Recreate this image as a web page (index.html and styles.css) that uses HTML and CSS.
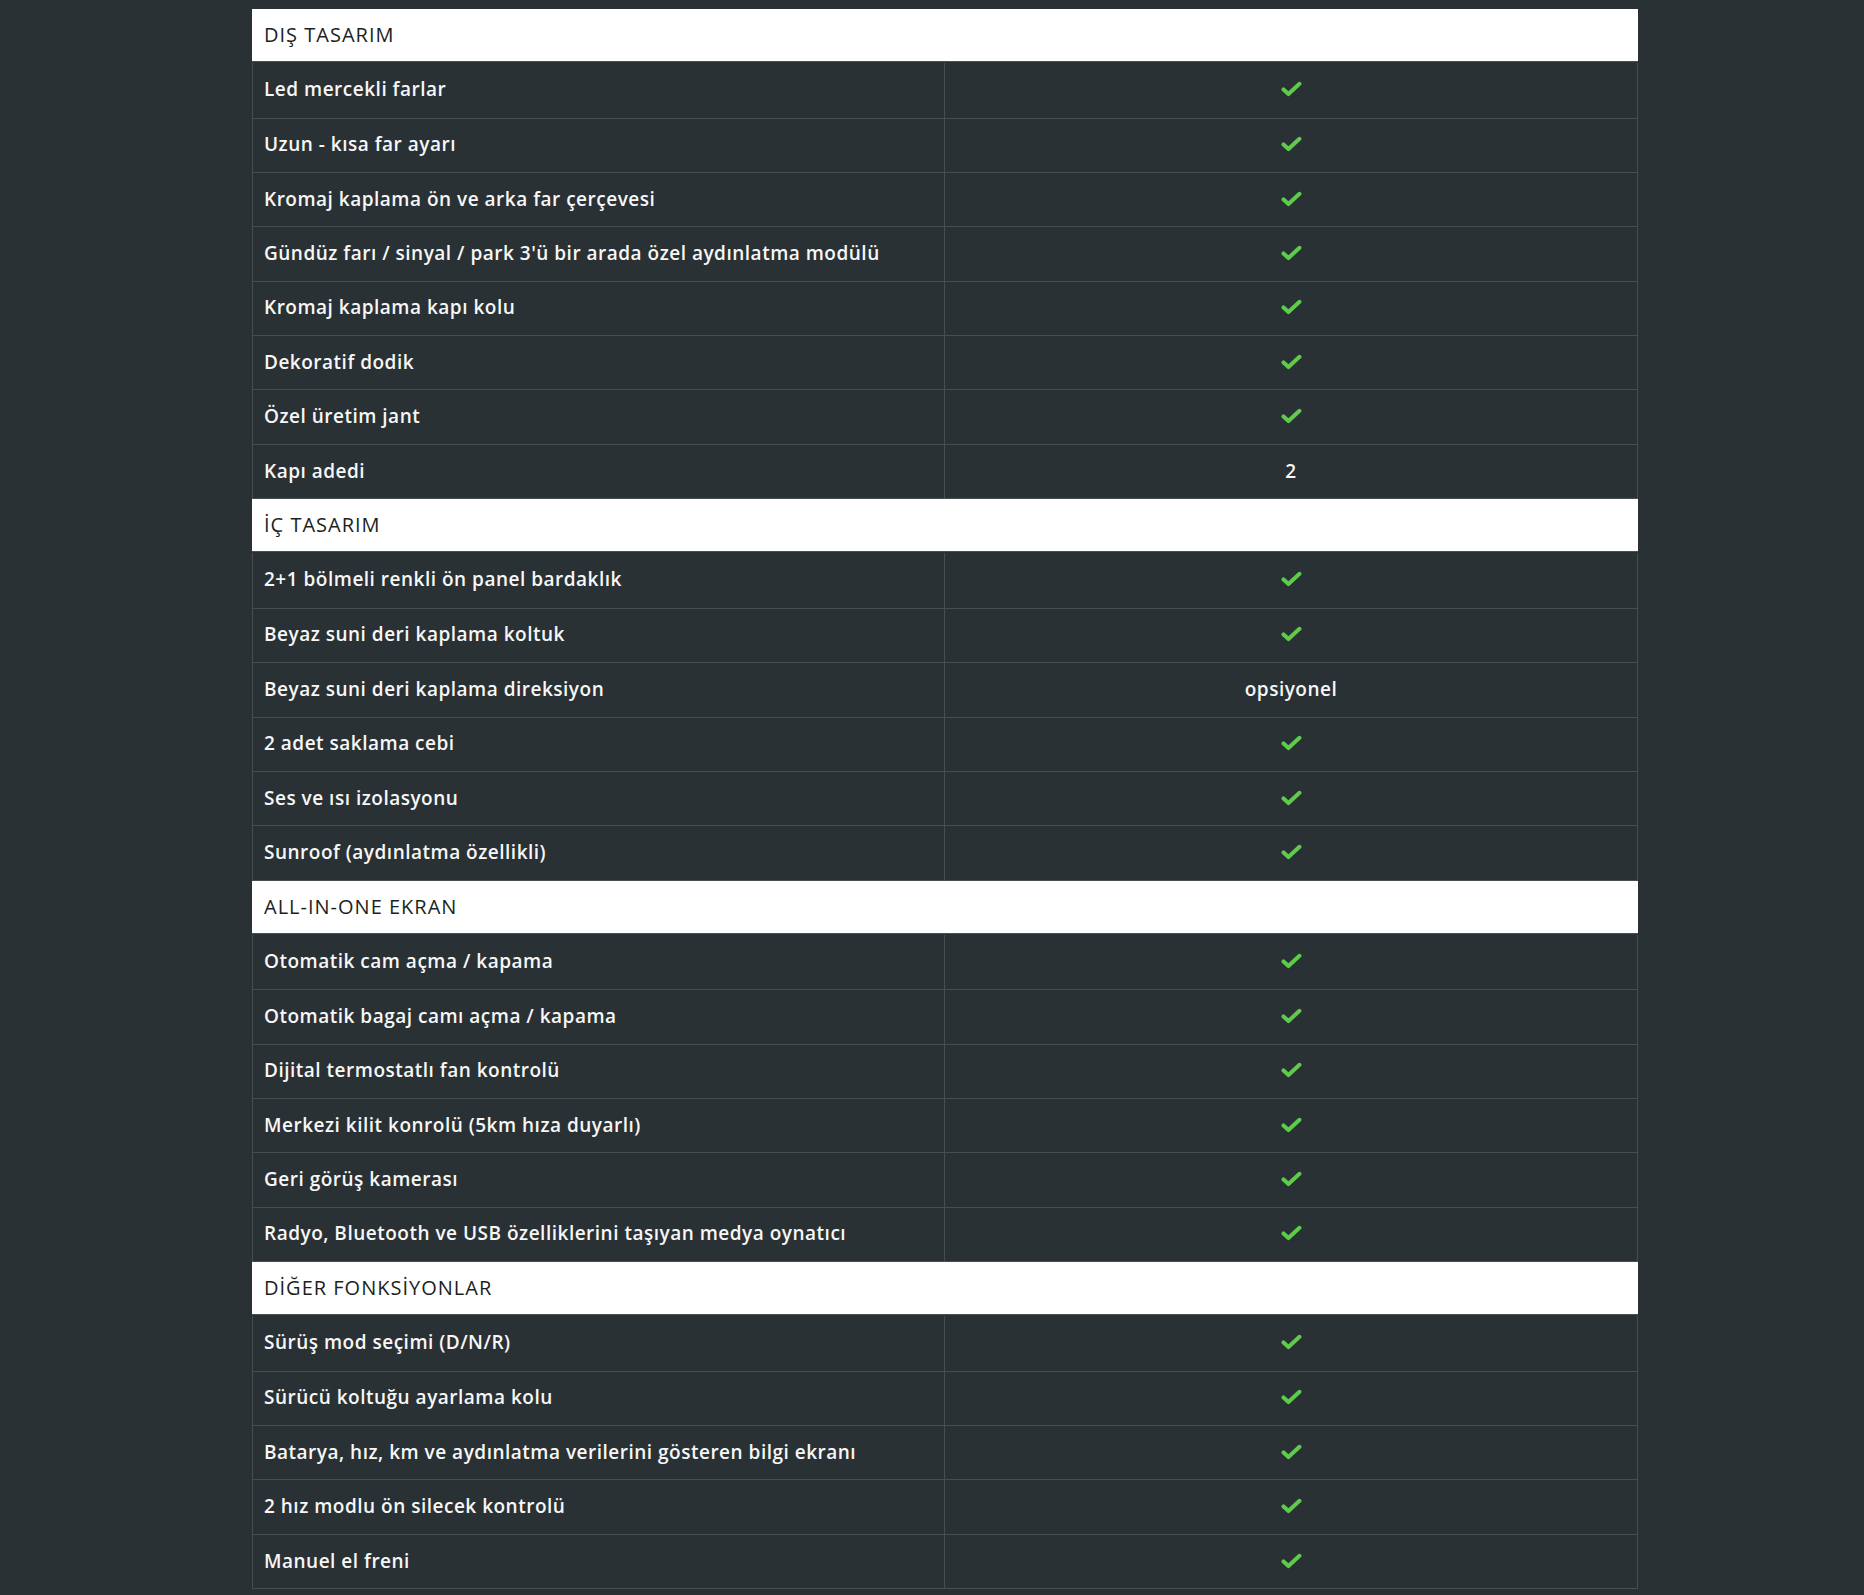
FILE: index.html
```html
<!DOCTYPE html>
<html lang="tr">
<head>
<meta charset="utf-8">
<title>Özellikler</title>
<link rel="stylesheet" href="styles.css">
</head>
<body>
<svg width="0" height="0" class="defs" aria-hidden="true">
  <symbol id="chk" viewBox="0 0 20 15"><path d="M2.4 7.9 L7.1 12.3 L17.6 2.5" fill="none" stroke="currentColor" stroke-width="3.8" stroke-linecap="round" stroke-linejoin="round"/></symbol>
</svg>
<div class="spec">
  <div class="head">DIŞ TASARIM</div>
  <div class="row"><div class="lbl">Led mercekli farlar</div><div class="val"><svg class="ck"><use href="#chk"/></svg></div></div>
  <div class="row"><div class="lbl">Uzun - kısa far ayarı</div><div class="val"><svg class="ck"><use href="#chk"/></svg></div></div>
  <div class="row"><div class="lbl">Kromaj kaplama ön ve arka far çerçevesi</div><div class="val"><svg class="ck"><use href="#chk"/></svg></div></div>
  <div class="row"><div class="lbl">Gündüz farı / sinyal / park 3'ü bir arada özel aydınlatma modülü</div><div class="val"><svg class="ck"><use href="#chk"/></svg></div></div>
  <div class="row"><div class="lbl">Kromaj kaplama kapı kolu</div><div class="val"><svg class="ck"><use href="#chk"/></svg></div></div>
  <div class="row"><div class="lbl">Dekoratif dodik</div><div class="val"><svg class="ck"><use href="#chk"/></svg></div></div>
  <div class="row"><div class="lbl">Özel üretim jant</div><div class="val"><svg class="ck"><use href="#chk"/></svg></div></div>
  <div class="row"><div class="lbl">Kapı adedi</div><div class="val">2</div></div>

  <div class="head">İÇ TASARIM</div>
  <div class="row"><div class="lbl">2+1 bölmeli renkli ön panel bardaklık</div><div class="val"><svg class="ck"><use href="#chk"/></svg></div></div>
  <div class="row"><div class="lbl">Beyaz suni deri kaplama koltuk</div><div class="val"><svg class="ck"><use href="#chk"/></svg></div></div>
  <div class="row"><div class="lbl">Beyaz suni deri kaplama direksiyon</div><div class="val">opsiyonel</div></div>
  <div class="row"><div class="lbl">2 adet saklama cebi</div><div class="val"><svg class="ck"><use href="#chk"/></svg></div></div>
  <div class="row"><div class="lbl">Ses ve ısı izolasyonu</div><div class="val"><svg class="ck"><use href="#chk"/></svg></div></div>
  <div class="row"><div class="lbl">Sunroof (aydınlatma özellikli)</div><div class="val"><svg class="ck"><use href="#chk"/></svg></div></div>

  <div class="head">ALL-IN-ONE EKRAN</div>
  <div class="row"><div class="lbl">Otomatik cam açma / kapama</div><div class="val"><svg class="ck"><use href="#chk"/></svg></div></div>
  <div class="row"><div class="lbl">Otomatik bagaj camı açma / kapama</div><div class="val"><svg class="ck"><use href="#chk"/></svg></div></div>
  <div class="row"><div class="lbl">Dijital termostatlı fan kontrolü</div><div class="val"><svg class="ck"><use href="#chk"/></svg></div></div>
  <div class="row"><div class="lbl">Merkezi kilit konrolü (5km hıza duyarlı)</div><div class="val"><svg class="ck"><use href="#chk"/></svg></div></div>
  <div class="row"><div class="lbl">Geri görüş kamerası</div><div class="val"><svg class="ck"><use href="#chk"/></svg></div></div>
  <div class="row"><div class="lbl">Radyo, Bluetooth ve USB özelliklerini taşıyan medya oynatıcı</div><div class="val"><svg class="ck"><use href="#chk"/></svg></div></div>

  <div class="head">DİĞER FONKSİYONLAR</div>
  <div class="row"><div class="lbl">Sürüş mod seçimi (D/N/R)</div><div class="val"><svg class="ck"><use href="#chk"/></svg></div></div>
  <div class="row"><div class="lbl">Sürücü koltuğu ayarlama kolu</div><div class="val"><svg class="ck"><use href="#chk"/></svg></div></div>
  <div class="row"><div class="lbl">Batarya, hız, km ve aydınlatma verilerini gösteren bilgi ekranı</div><div class="val"><svg class="ck"><use href="#chk"/></svg></div></div>
  <div class="row"><div class="lbl">2 hız modlu ön silecek kontrolü</div><div class="val"><svg class="ck"><use href="#chk"/></svg></div></div>
  <div class="row"><div class="lbl">Manuel el freni</div><div class="val"><svg class="ck"><use href="#chk"/></svg></div></div>
</div>
</body>
</html>
```

FILE: styles.css
```css
html, body {
  margin: 0;
  padding: 0;
  background: #2a3134;
}
body {
  font-family: "Open Sans", "Noto Sans", sans-serif;
  padding: 9px 0 0 252px;
}
.defs {
  position: absolute;
  width: 0;
  height: 0;
  overflow: hidden;
}
.spec {
  width: 1386px;
  display: flex;
  flex-direction: column;
}
.head {
  background: #ffffff;
  color: #1c1f21;
  height: 53px;
  box-sizing: border-box;
  border-bottom: 1px solid #4a5153;
  padding: 0 12px 1px;
  display: flex;
  align-items: center;
  font-size: 20px;
  font-weight: 400;
  letter-spacing: 1px;
  margin-bottom: 1px;
}
.row {
  display: grid;
  grid-template-columns: 692px 1fr;
  height: 54.4px;
  box-sizing: border-box;
  padding-bottom: 2px;
  border-left: 1px solid #474e50;
  border-right: 1px solid #474e50;
  border-bottom: 1px solid #474e50;
  color: #f7f7f7;
  font-size: 19px;
  font-weight: 600;
  letter-spacing: 0.5px;
}
.head + .row {
  height: 55.5px;
}
.lbl {
  display: flex;
  align-items: center;
  padding-left: 11px;
  border-right: 1px solid #474e50;
  margin-bottom: -2px;
  padding-bottom: 2px;
}
.val {
  display: flex;
  align-items: center;
  justify-content: center;
}
.ck {
  width: 21px;
  height: 16px;
  color: #5fcb4b;
}
```
